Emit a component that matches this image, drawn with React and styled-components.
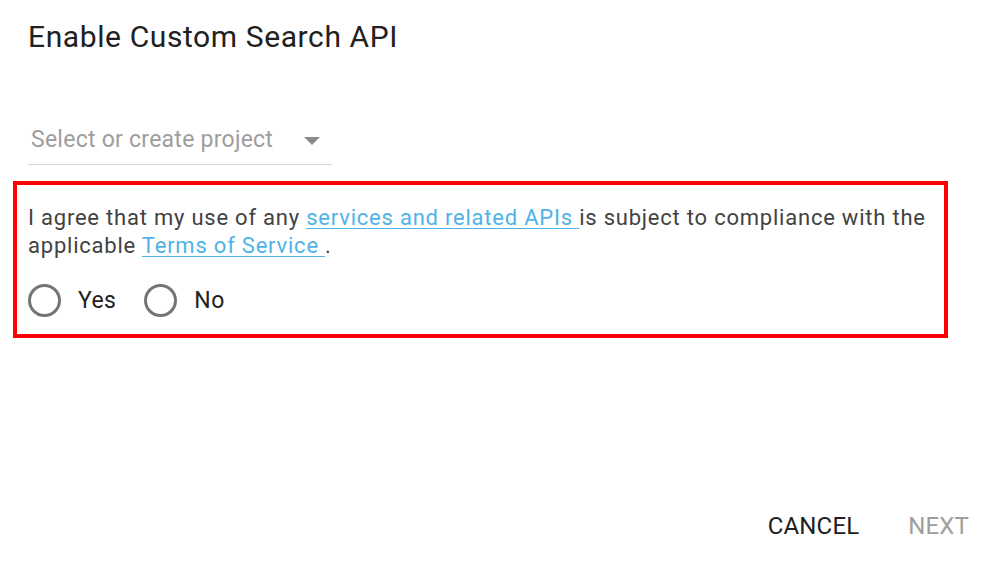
import React from "react";
import styled, { createGlobalStyle } from "styled-components";

const Global = createGlobalStyle`
  html, body { margin: 0; padding: 0; background: #fff; }
  body { font-family: Roboto, "Noto Sans", "Liberation Sans", sans-serif; }
  * { box-sizing: border-box; }
`;

const Dialog = styled.div`
  width: 1000px;
  height: 562px;
  display: flex;
  flex-direction: column;
  padding: 0 0 0 13px;
`;

const Title = styled.h1`
  margin: 19px 0 0 15px;
  font-size: 30px;
  font-weight: 400;
  letter-spacing: 0.6px;
  line-height: 36px;
  color: #212121;
`;

const SelectField = styled.div`
  margin: 68px 0 0 15px;
  width: 304px;
  height: 42px;
  display: flex;
  align-items: center;
  justify-content: space-between;
  border-bottom: 1px solid #d6d6d6;
  padding: 0 12px 8px 3px;
`;

const Placeholder = styled.span`
  font-size: 23px;
  letter-spacing: 0.25px;
  color: #9e9e9e;
`;

const Caret = styled.span`
  width: 0;
  height: 0;
  border-left: 8px solid transparent;
  border-right: 8px solid transparent;
  border-top: 8px solid #8a8a8a;
  margin-top: 2px;
`;

const Highlight = styled.section`
  margin-top: 16px;
  width: 935px;
  height: 157px;
  border: 4px solid #ff0000;
  padding: 19px 0 0 11px;
`;

const Agreement = styled.p`
  margin: 0;
  font-size: 22px;
  letter-spacing: 0.78px;
  line-height: 28px;
  color: #424242;
`;

const Link = styled.a`
  color: #4fb3e8;
  text-decoration: underline;
  text-underline-offset: 3px;
  text-decoration-thickness: 1px;
`;

const Options = styled.div`
  display: flex;
  align-items: center;
  gap: 28px;
  margin-top: 24px;
`;

const Option = styled.label`
  display: flex;
  align-items: center;
  gap: 17px;
  font-size: 23px;
  letter-spacing: 0.4px;
  color: #212121;
`;

const Radio = styled.span`
  width: 33px;
  height: 33px;
  border-radius: 50%;
  border: 3px solid #757575;
`;

const Actions = styled.div`
  margin-top: auto;
  display: flex;
  justify-content: flex-end;
  gap: 49px;
  padding: 0 31px 22px 0;
`;

const Button = styled.button`
  border: none;
  background: none;
  padding: 0;
  font-family: inherit;
  font-size: 24px;
  font-weight: 400;
  letter-spacing: 0.15px;
  color: ${(p) => (p.$disabled ? "#9e9e9e" : "#212121")};
`;

export default function App() {
  return (
    <>
      <Global />
      <Dialog>
        <Title>Enable Custom Search API</Title>
        <SelectField>
          <Placeholder>Select or create project</Placeholder>
          <Caret />
        </SelectField>
        <Highlight>
          <Agreement>
            I agree that my use of any <Link href="#">services and related APIs </Link>is
            subject to compliance with the applicable <Link href="#">Terms of Service </Link>.
          </Agreement>
          <Options>
            <Option>
              <Radio />
              Yes
            </Option>
            <Option>
              <Radio />
              No
            </Option>
          </Options>
        </Highlight>
        <Actions>
          <Button>CANCEL</Button>
          <Button $disabled>NEXT</Button>
        </Actions>
      </Dialog>
    </>
  );
}
